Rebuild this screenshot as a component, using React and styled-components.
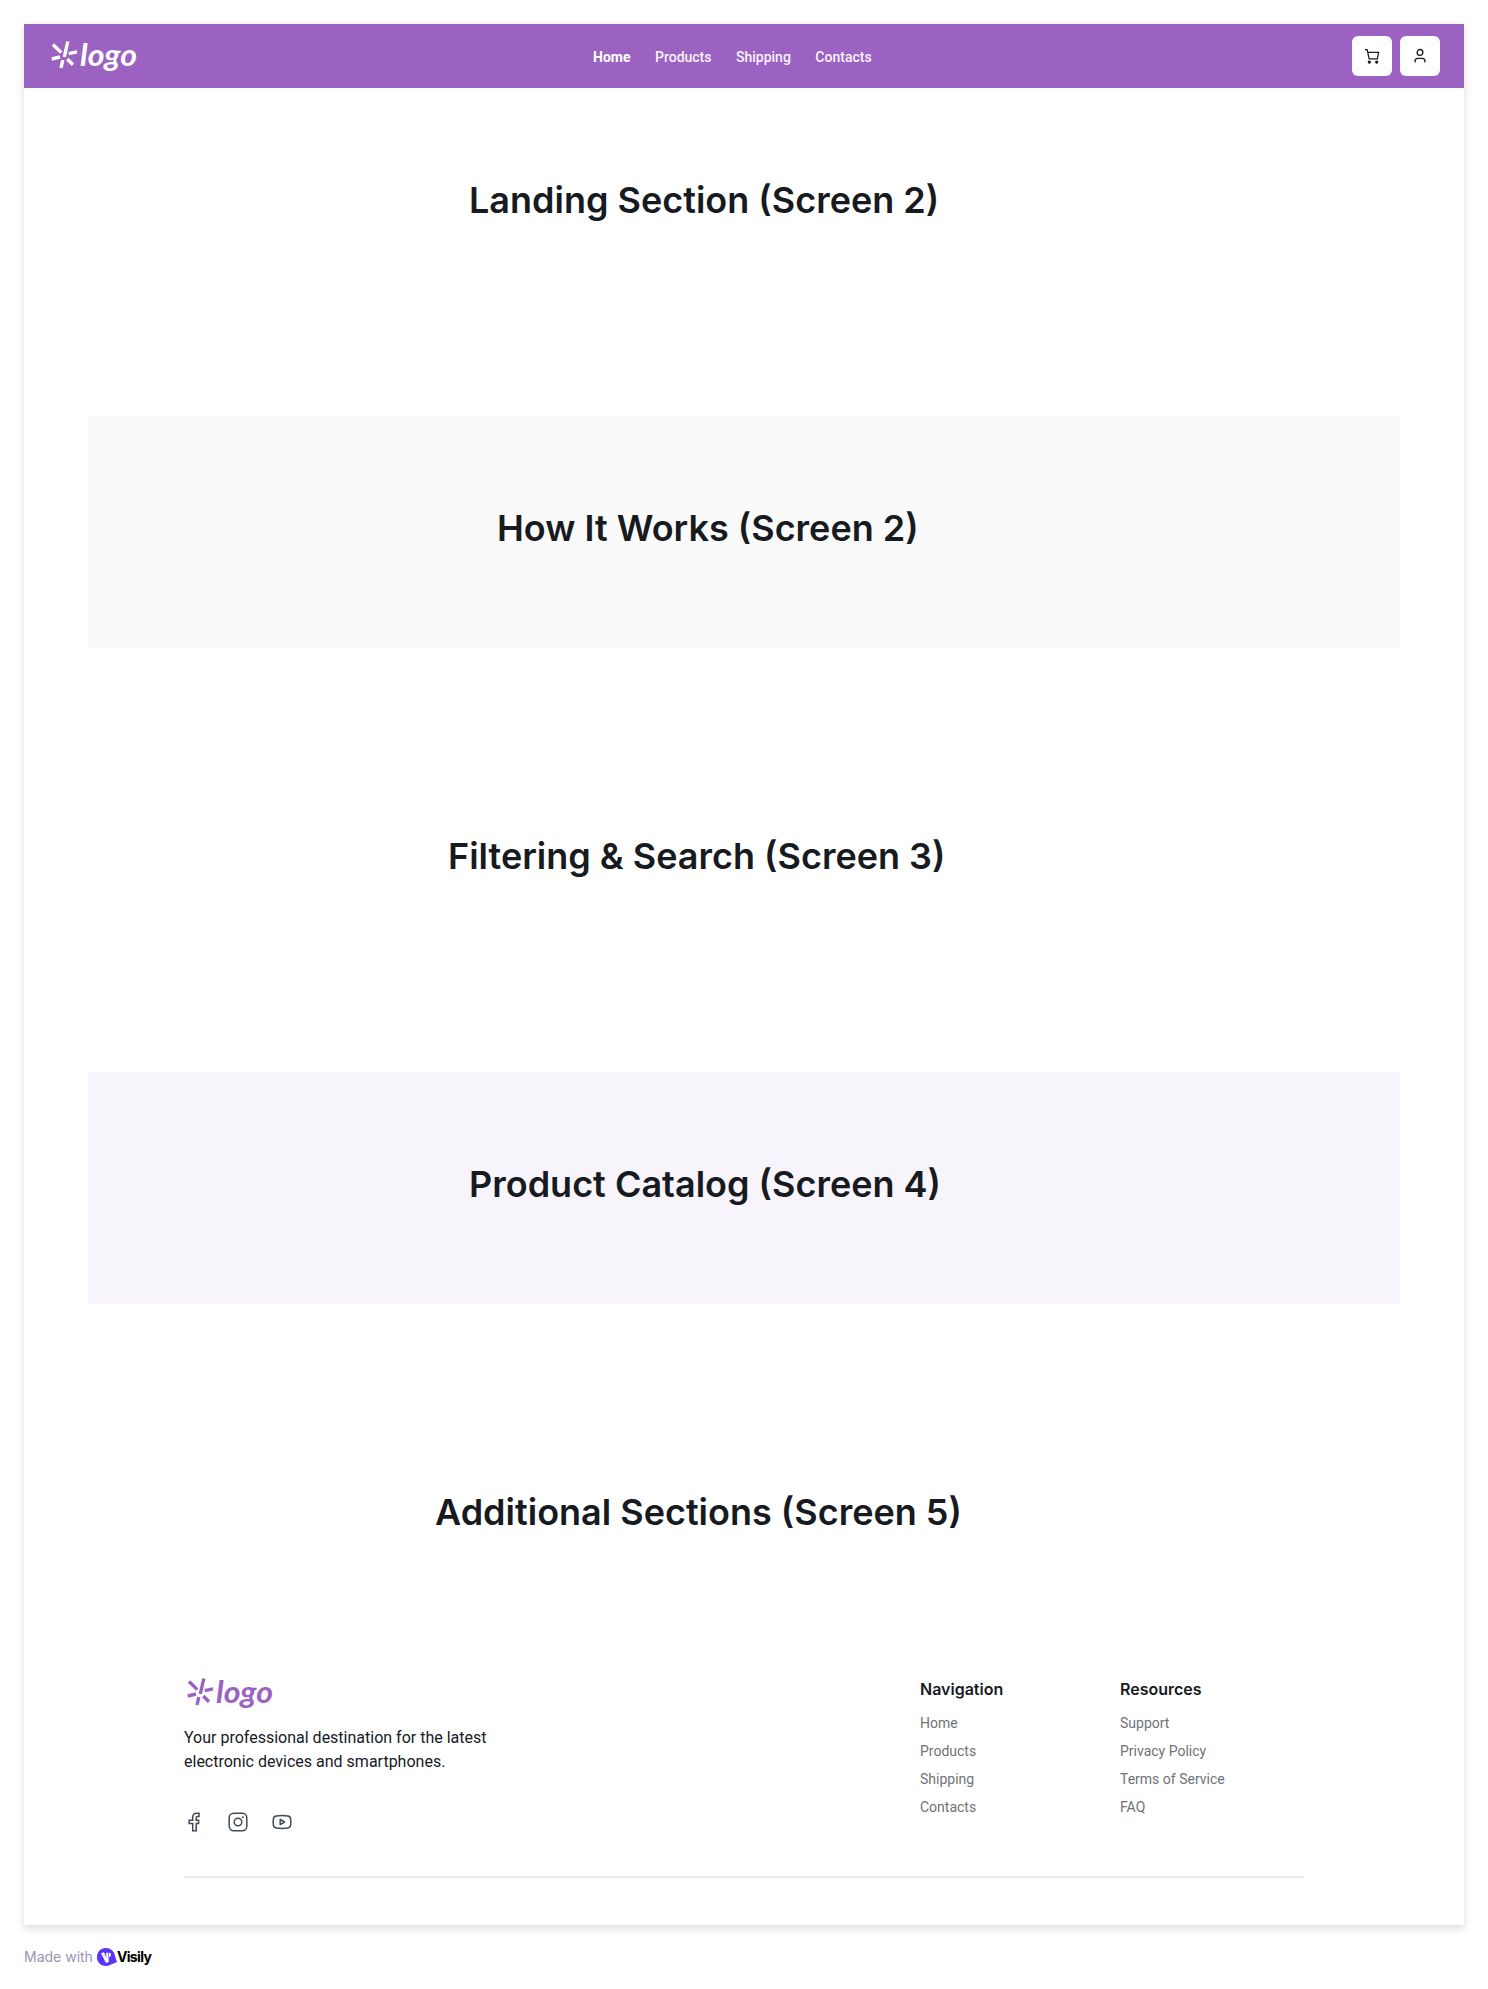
import React from "react";
import styled, { createGlobalStyle } from "styled-components";

const Global = createGlobalStyle`
  * { box-sizing: border-box; }
  body { margin: 0; background: #fff; font-family: Roboto, "Liberation Sans", sans-serif; }
  h2, h3, p, ul { margin: 0; padding: 0; }
`;
const Page = styled.div`
  width: 1488px;
  height: 1989px;
  padding: 24px 24px 17px;
  display: flex;
  flex-direction: column;
  gap: 17px;
`;
const Frame = styled.div`
  height: 1901px;
  flex: none;
  background: #fff;
  display: flex;
  flex-direction: column;
  box-shadow: 0 3px 8px rgba(0, 0, 0, 0.15);
`;
const Header = styled.header`
  height: 64px;
  flex: none;
  background: #9c62c1;
  display: flex;
  align-items: center;
  padding: 0 24px 0 25px;
`;
const Nav = styled.nav`
  display: flex;
  gap: 24.5px;
  margin-left: 454px;
  padding-top: 2px;
  flex: 1;
`;
const NavLink = styled.a`
  font-size: 14px;
  line-height: 22px;
  font-weight: ${(p) => (p.$active ? 700 : 500)};
  color: ${(p) => (p.$active ? "#ffffff" : "#f8f2fb")};
`;
const Actions = styled.div`
  display: flex;
  gap: 8px;
`;
const IconButton = styled.button`
  width: 40px;
  height: 40px;
  border: 0;
  border-radius: 6px;
  padding: 0;
  background: #fff;
  color: #171a1f;
  display: flex;
  align-items: center;
  justify-content: center;
`;
const Main = styled.main`
  display: flex;
  flex-direction: column;
  gap: 96px;
  padding: 0 64px;
`;
const Section = styled.section`
  height: 232px;
  background: ${(p) => p.$bg};
  padding: 84px 0 0 ${(p) => p.$indent}px;
`;
const Title = styled.h2`
  font: 600 36px/56px Inter, sans-serif;
  color: #171a1f;
  white-space: nowrap;
`;
const Footer = styled.footer`
  margin: 37px 160px 0;
  height: 209px;
  border-bottom: 2px solid #ebebef;
  display: flex;
`;
const Brand = styled.div`
  width: 736px;
  flex: none;
`;
const BrandLogo = styled.div`
  padding-left: 1px;
`;
const Tagline = styled.p`
  font-size: 16px;
  line-height: 24px;
  color: #171a1f;
  margin-top: 9px;
`;
const Socials = styled.div`
  display: flex;
  gap: 24px;
  margin-top: 38px;
  color: #424955;
`;
const LinkColumn = styled.div`
  width: 200px;
  flex: none;
  padding-top: 7px;
`;
const ColumnTitle = styled.h3`
  font: 600 16px/26px Inter, sans-serif;
  color: #171a1f;
`;
const Links = styled.ul`
  list-style: none;
  display: flex;
  flex-direction: column;
  gap: 6px;
  margin-top: 10px;
  font-size: 14px;
  line-height: 22px;
  color: #6f7276;
  white-space: nowrap;
`;
const Credit = styled.div`
  display: flex;
  align-items: center;
  height: 30px;
  font: 400 14px/20px Inter, sans-serif;
  color: #9a94b3;
`;
const CreditName = styled.strong`
  font: 700 14px/20px Inter, sans-serif;
  letter-spacing: -0.65px;
  color: #000;
`;
const Svg = styled.svg`
  display: block;
  flex: none;
`;
const CreditMark = styled(Svg)`
  margin-left: 4px;
`;
const Word = styled.text`
  font: italic 700 31px Lato, sans-serif;
`;

function Logo({ color }) {
  return (
    <Svg width="90" height="48" viewBox="0 0 90 48">
      <g stroke={color} strokeWidth="3.4" strokeLinecap="butt">
        <path d="M18.8 9.5 15.3 25M4 12.5 12.3 20.6M2.8 27 11 25M19.7 21.7 28 19.8M18.3 27 24 32.8M13.8 28 12 36" />
      </g>
      <Word x="31" y="33.5" fill={color} textLength="57" lengthAdjust="spacingAndGlyphs">logo</Word>
    </Svg>
  );
}
const line = { fill: "none", stroke: "currentColor", strokeLinejoin: "miter" };

function Cart() {
  return (
    <Svg width="16" height="16" viewBox="0 0 16 16" {...line} strokeWidth="1.25">
      <path d="M1 1.7h2.2l1.9 9.2h8.2l1.3-6.5H3.8" />
      <circle cx="5.3" cy="14" r="1" fill="currentColor" />
      <circle cx="12.7" cy="14" r="1" fill="currentColor" />
    </Svg>
  );
}
function User() {
  return (
    <Svg width="16" height="16" viewBox="0 0 16 16" {...line} strokeWidth="1.3">
      <circle cx="8" cy="4.4" r="2.9" />
      <path d="M3 14.6v-1.2a3 3 0 0 1 3-3h4a3 3 0 0 1 3 3v1.2" />
    </Svg>
  );
}
function Facebook() {
  return (
    <Svg width="20" height="20" viewBox="0 0 20 20" {...line} strokeWidth="1.5">
      <path d="M15 1.2h-2.2c-2.7 0-4.1 1.6-4.1 4v3.1H5.2v3.2h3.5v7.2h3.5v-7.2h2.4V8.3h-2.4V5.7c0-.9.5-1.2 1.2-1.2H15z" />
    </Svg>
  );
}
function Instagram() {
  return (
    <Svg width="20" height="20" viewBox="0 0 20 20" {...line} strokeWidth="1.5">
      <rect x="1.2" y="1.2" width="17.6" height="17.6" rx="4.5" />
      <circle cx="10" cy="10" r="3.8" />
      <circle cx="14.8" cy="5.2" r="1" fill="currentColor" stroke="none" />
    </Svg>
  );
}
function Youtube() {
  return (
    <Svg width="20" height="20" viewBox="0 0 20 20" {...line} strokeWidth="1.5">
      <path d="M4.2 4Q10 3.2 15.8 4q2.5.3 2.8 2.8.5 3.2 0 6.4-.3 2.5-2.8 2.8-5.8.8-11.6 0-2.5-.3-2.8-2.8-.5-3.2 0-6.4Q1.7 4.3 4.2 4z" />
      <path d="M8.2 7.3v5.4l4.3-2.7z" strokeLinejoin="round" />
    </Svg>
  );
}

const sections = [
  { title: "Landing Section (Screen 2)", indent: 381, bg: "transparent" },
  { title: "How It Works (Screen 2)", indent: 409, bg: "#fafafb" },
  { title: "Filtering & Search (Screen 3)", indent: 360, bg: "transparent" },
  { title: "Product Catalog (Screen 4)", indent: 381, bg: "#f7f4fb" },
  { title: "Additional Sections (Screen 5)", indent: 347, bg: "transparent" },
];
const columns = [
  { title: "Navigation", links: ["Home", "Products", "Shipping", "Contacts"] },
  { title: "Resources", links: ["Support", "Privacy Policy", "Terms of Service", "FAQ"] },
];

export default function App() {
  return (
    <Page>
      <Global />
      <Frame>
        <Header>
          <Logo color="#ffffff" />
          <Nav>
            {["Home", "Products", "Shipping", "Contacts"].map((n, i) => (
              <NavLink key={n} $active={i === 0}>{n}</NavLink>
            ))}
          </Nav>
          <Actions>
            <IconButton aria-label="Cart"><Cart /></IconButton>
            <IconButton aria-label="Account"><User /></IconButton>
          </Actions>
        </Header>
        <Main>
          {sections.map((s) => (
            <Section key={s.title} $bg={s.bg} $indent={s.indent}>
              <Title>{s.title}</Title>
            </Section>
          ))}
        </Main>
        <Footer>
          <Brand>
            <BrandLogo><Logo color="#9c62c1" /></BrandLogo>
            <Tagline>Your professional destination for the latest<br />electronic devices and smartphones.</Tagline>
            <Socials><Facebook /><Instagram /><Youtube /></Socials>
          </Brand>
          {columns.map((c) => (
            <LinkColumn key={c.title}>
              <ColumnTitle>{c.title}</ColumnTitle>
              <Links>{c.links.map((l) => <li key={l}>{l}</li>)}</Links>
            </LinkColumn>
          ))}
        </Footer>
      </Frame>
      <Credit>
        <span>Made with</span>
        <CreditMark width="20" height="18" viewBox="0 0 20 18">
          <path d="M9 0a9 9 0 0 1 9 8l2 6-7 3A9 9 0 1 1 9 0z" fill="#5b34fb" />
          <path d="M4 5.2 7 4.2 9.5 10.2 9 5 11.3 4.4 11.8 14 9 15z" fill="#fff" />
          <path d="M12 4.8 14 5.5 13.4 9 12.2 9.2z" fill="#fff" />
        </CreditMark>
        <CreditName>Visily</CreditName>
      </Credit>
    </Page>
  );
}
